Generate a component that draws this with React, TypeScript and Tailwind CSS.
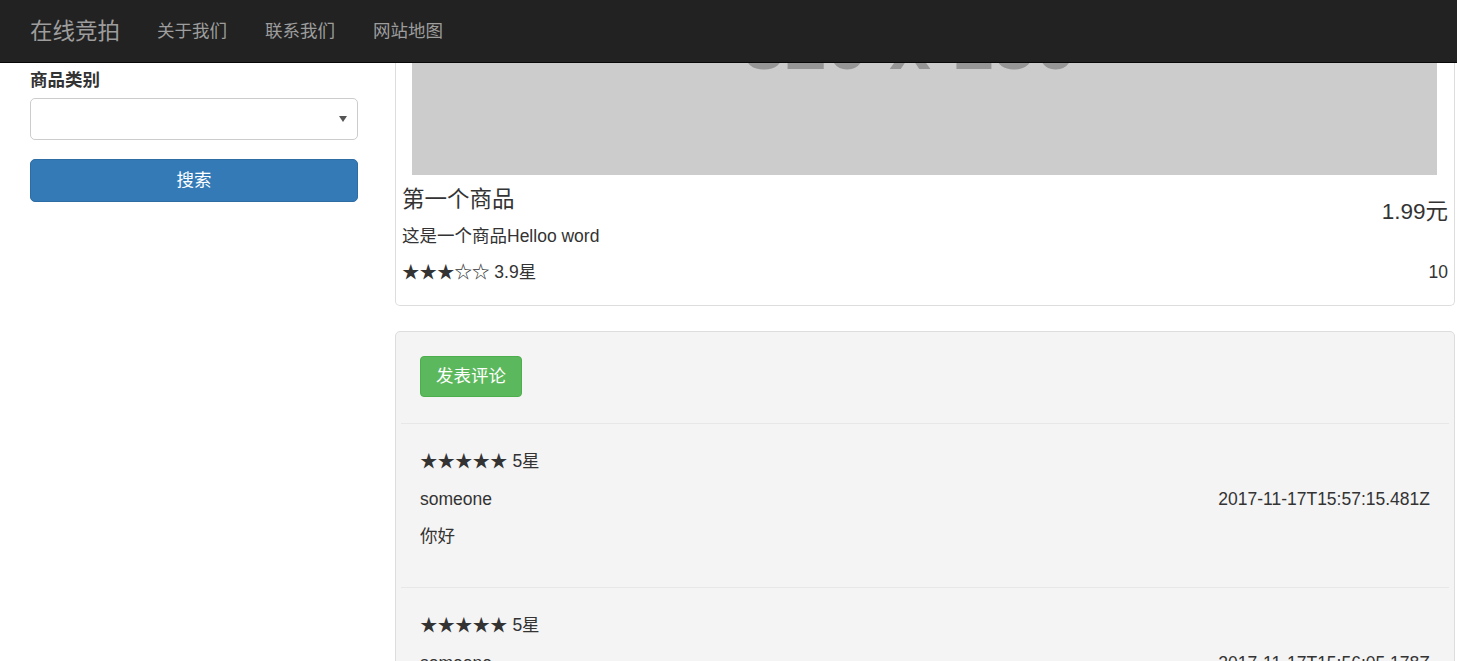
import React from "react";

const font = { fontFamily: '"Liberation Sans", Arial, "Noto Sans CJK SC", sans-serif' };

const comments = [
    { rating: 5, user: "someone", date: "2017-11-17T15:57:15.481Z", content: "你好" },
    { rating: 5, user: "someone", date: "2017-11-17T15:56:05.178Z", content: "你好" },
];

function Stars({ rating }: { rating: number }) {
    const full = Math.round(rating);
    return (
        <span>
            {"★★★★★".slice(0, full)}
            {"☆☆☆☆☆".slice(0, 5 - full)}
        </span>
    );
}

function Navbar() {
    return (
        <header className="h-[63px] bg-[#222] border-b border-[#080808] flex items-center pl-[30px]">
            <a href="#" className="text-[22.5px] text-[#9d9d9d] leading-[25px]">在线竞拍</a>
            <nav className="flex gap-[38px] ml-[37px] text-[17.5px] text-[#9d9d9d] leading-[25px]">
                <a href="#">关于我们</a>
                <a href="#">联系我们</a>
                <a href="#">网站地图</a>
            </nav>
        </header>
    );
}

function SearchForm() {
    return (
        <div className="w-[328px] shrink-0">
            <label className="block mt-[5px] text-[17.5px] font-bold leading-[25px]">商品类别</label>
            <div className="mt-[5px] h-[42px] border border-[#ccc] rounded-[5px] bg-white flex items-center justify-end pr-[10px]">
                <svg width="8" height="6" viewBox="0 0 8 6">
                    <path d="M0 0 L8 0 L4 6 Z" fill="#555" />
                </svg>
            </div>
            <button className="mt-[19px] w-full h-[43px] bg-[#337ab7] border border-[#2e6da4] rounded-[5px] text-white text-[17.5px]">
                搜索
            </button>
        </div>
    );
}

function ProductCard() {
    return (
        <div className="border border-t-0 border-[#ddd] rounded-b-[5px] bg-white">
            <div className="pl-[16px]">
                <svg width="1025" height="112" className="block">
                    <rect width="1025" height="112" fill="#ccc" />
                    <text x="498" y="6" textAnchor="middle" fontSize="75" fontWeight="bold" fill="#969696" fontFamily="Liberation Sans, Arial, sans-serif">
                        320 x 150
                    </text>
                </svg>
            </div>
            <div className="px-[6px] pb-[20px]">
                <div className="flex justify-between items-start">
                    <h4 className="mt-[12px] text-[22.5px] leading-[25px]">第一个商品</h4>
                    <h4 className="mt-[24px] text-[22.5px] leading-[25px]">1.99元</h4>
                </div>
                <p className="text-[17.5px] leading-[25px]">这是一个商品Helloo word</p>
                <div className="mt-[11px] flex justify-between text-[17.5px] leading-[25px]">
                    <p><Stars rating={3} /> 3.9星</p>
                    <p>10</p>
                </div>
            </div>
        </div>
    );
}

function CommentPanel() {
    return (
        <div className="mt-[25px] border border-[#ddd] rounded-t-[5px] bg-[#f4f4f4] px-[5px] pt-[24px] min-h-[400px]">
            <div className="px-[19px]">
                <button className="h-[41px] px-[15px] bg-[#5cb85c] border border-[#4cae4c] rounded-[4px] text-white text-[17.5px]">
                    发表评论
                </button>
            </div>
            <div className="mt-[26px]">
                {comments.map((c, i) => (
                    <div key={i} className="border-t border-[#e7e7e7] px-[19px] pt-[25px] pb-[38px] text-[17.5px] leading-[25px]">
                        <p><Stars rating={c.rating} /> {c.rating}星</p>
                        <div className="mt-[13px] flex justify-between">
                            <span>{c.user}</span>
                            <span>{c.date}</span>
                        </div>
                        <p className="mt-[12px]">{c.content}</p>
                    </div>
                ))}
            </div>
        </div>
    );
}

export default function App() {
    return (
        <div className="w-full h-[661px] overflow-hidden bg-white text-[#333]" style={font}>
            <Navbar />
            <main className="flex gap-[37px] pl-[30px]">
                <SearchForm />
                <div className="w-[1060px] shrink-0">
                    <ProductCard />
                    <CommentPanel />
                </div>
            </main>
        </div>
    );
}
